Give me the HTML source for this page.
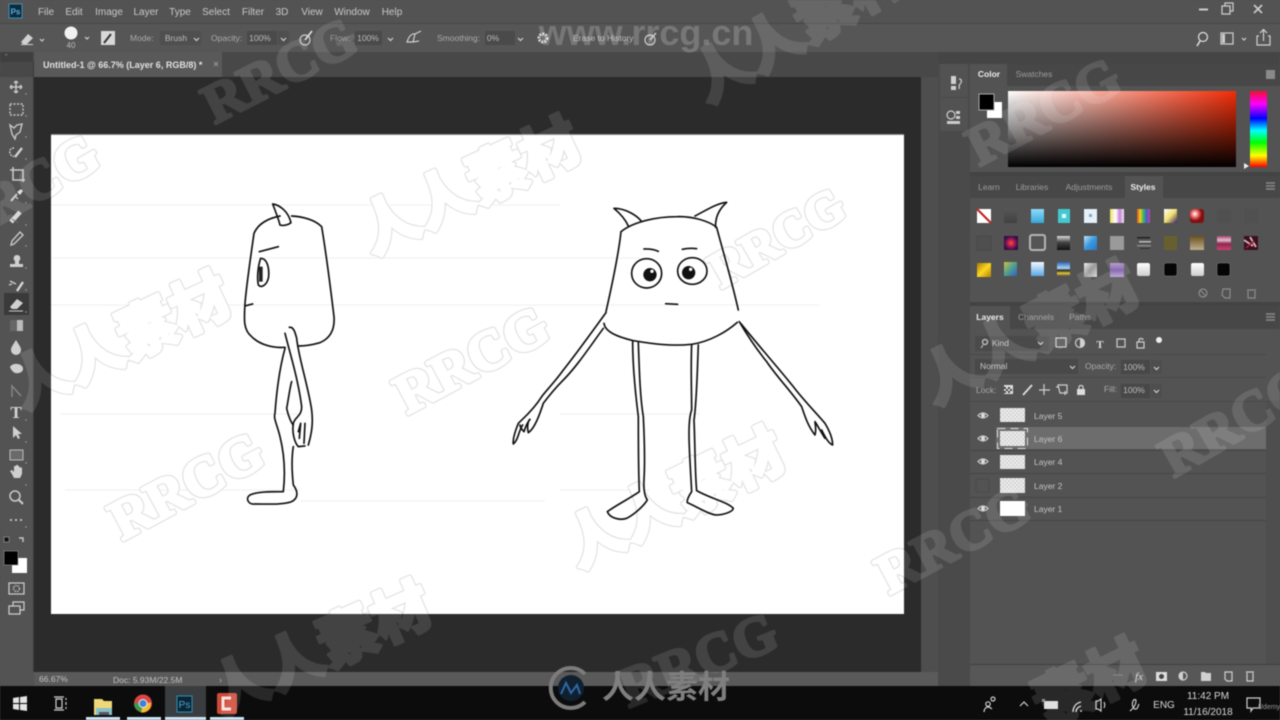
<!DOCTYPE html>
<html><head><meta charset="utf-8"><style>
html,body{margin:0;padding:0;background:#535353;width:1280px;height:720px;overflow:hidden}
svg{display:block;filter:blur(.6px)}
text{font-family:"Liberation Sans","Noto Sans CJK SC",sans-serif;fill:#bdbdbd;font-size:8.5px}
.m{font-size:10px;fill:#c8c8c8;text-anchor:middle}
.o{font-size:8.5px;fill:#aaa}
.oc{font-size:8.5px;fill:#bbb;text-anchor:middle}
.l{font-size:8.5px;fill:#c4c4c4}
.t{font-size:8.5px;fill:#9c9c9c;text-anchor:middle}
.ta{font-size:8.5px;fill:#eee;font-weight:bold;text-anchor:middle}
.i{fill:none;stroke:#cfcfcf;stroke-width:1.2}
.f{fill:#d0d0d0;stroke:none}
.w{font-family:"Liberation Serif",serif;font-weight:bold;font-size:56px;text-anchor:middle}
.c{font-family:"Noto Sans CJK SC","Noto Sans CJK JP",sans-serif;font-weight:900;font-size:59px;text-anchor:middle}
.wd text{fill:#fff;stroke:#fff;stroke-width:3;stroke-linejoin:round}
.wo text{fill:#e2e2e2;stroke:#e2e2e2;stroke-width:5;stroke-linejoin:round}
.wi text{fill:#fff;stroke:#fff;stroke-width:2.6;stroke-linejoin:round}
.d{fill:none;stroke:#111;stroke-width:5;stroke-linecap:round;stroke-linejoin:round}
.tb{fill:none;stroke:#c8c8c8;stroke-width:1.4}
</style></head><body>
<svg width="1280" height="720" viewBox="0 0 1280 720" xmlns="http://www.w3.org/2000/svg">
<defs>
<clipPath id="cv"><rect x="51" y="135" width="853" height="479"/></clipPath>
<clipPath id="nc"><path clip-rule="evenodd" d="M0 0H1280V720H0ZM51 135V614H904V135Z"/></clipPath>
<linearGradient id="gh"><stop offset="0" stop-color="#fff"/><stop offset="1" stop-color="#f22d08"/></linearGradient>
<linearGradient id="gv" x2="0" y2="1"><stop offset="0" stop-color="#000" stop-opacity="0"/><stop offset="1" stop-color="#000"/></linearGradient>
<linearGradient id="hue" x2="0" y2="1"><stop offset="0" stop-color="#f01030"/><stop offset=".17" stop-color="#f0f"/><stop offset=".36" stop-color="#00f"/><stop offset=".52" stop-color="#0ff"/><stop offset=".68" stop-color="#0f0"/><stop offset=".85" stop-color="#ff0"/><stop offset="1" stop-color="#f00"/></linearGradient>
<linearGradient id="s1" x2="0" y2="1"><stop offset="0" stop-color="#8fdcf8"/><stop offset="1" stop-color="#35a8dc"/></linearGradient>
<linearGradient id="s2" x2="0" y2="1"><stop offset="0" stop-color="#565656"/><stop offset="1" stop-color="#404040"/></linearGradient>
<linearGradient id="s3"><stop offset="0" stop-color="#e8e060"/><stop offset=".4" stop-color="#fff"/><stop offset=".7" stop-color="#c880d8"/><stop offset="1" stop-color="#eee"/></linearGradient>
<linearGradient id="s4"><stop offset="0" stop-color="#e05020"/><stop offset=".25" stop-color="#e8d020"/><stop offset=".5" stop-color="#40b060"/><stop offset=".75" stop-color="#4060d0"/><stop offset="1" stop-color="#d040a0"/></linearGradient>
<linearGradient id="s5" x2="1" y2="1"><stop offset="0" stop-color="#fff"/><stop offset=".5" stop-color="#f0e070"/><stop offset="1" stop-color="#402060"/></linearGradient>
<radialGradient id="s6" cx=".35" cy=".35"><stop offset="0" stop-color="#fff"/><stop offset=".6" stop-color="#e05050"/><stop offset="1" stop-color="#801010"/></radialGradient>
<radialGradient id="s7"><stop offset="0" stop-color="#ff5030"/><stop offset=".5" stop-color="#b01858"/><stop offset="1" stop-color="#301048"/></radialGradient>
<linearGradient id="s8" x2="0" y2="1"><stop offset="0" stop-color="#ddd"/><stop offset=".45" stop-color="#444"/><stop offset="1" stop-color="#111"/></linearGradient>
<linearGradient id="s9" x2="1" y2="1"><stop offset="0" stop-color="#bfe4fa"/><stop offset=".5" stop-color="#3a98e0"/><stop offset="1" stop-color="#2878c0"/></linearGradient>
<linearGradient id="s10" x2="0" y2="1"><stop offset="0" stop-color="#6a5020"/><stop offset="1" stop-color="#c0b090"/></linearGradient>
<linearGradient id="s11" x2="0" y2="1"><stop offset="0" stop-color="#b04070"/><stop offset=".3" stop-color="#e0c0d0"/><stop offset=".55" stop-color="#902850"/><stop offset="1" stop-color="#d04070"/></linearGradient>
<linearGradient id="s12" x2="1" y2="1"><stop offset="0" stop-color="#a87808"/><stop offset=".5" stop-color="#fdd820"/><stop offset="1" stop-color="#b08008"/></linearGradient>
<linearGradient id="s13" x2="1" y2="1"><stop offset="0" stop-color="#d0c040"/><stop offset=".5" stop-color="#50a090"/><stop offset="1" stop-color="#3060c0"/></linearGradient>
<linearGradient id="s14" x2="0" y2="1"><stop offset="0" stop-color="#f4f8ff"/><stop offset="1" stop-color="#58a8e8"/></linearGradient>
<linearGradient id="s15" x2="0" y2="1"><stop offset="0" stop-color="#3060b0"/><stop offset=".45" stop-color="#a8d8f8"/><stop offset=".6" stop-color="#222"/><stop offset=".8" stop-color="#e8c830"/><stop offset="1" stop-color="#555"/></linearGradient>
<linearGradient id="s16" x2="1" y2="1"><stop offset="0" stop-color="#f0f0f0"/><stop offset=".5" stop-color="#999"/><stop offset="1" stop-color="#ddd"/></linearGradient>
<linearGradient id="s17" x2="0" y2="1"><stop offset="0" stop-color="#b090c8"/><stop offset=".5" stop-color="#7858a8"/><stop offset="1" stop-color="#b8a0d0"/></linearGradient>
<linearGradient id="s18" x2="0" y2="1"><stop offset="0" stop-color="#fff"/><stop offset="1" stop-color="#cfcfcf"/></linearGradient>
<pattern id="chk" width="4" height="4" patternUnits="userSpaceOnUse"><rect width="4" height="4" fill="#eee"/><rect width="2" height="2" fill="#d4d4d4"/><rect x="2" y="2" width="2" height="2" fill="#d4d4d4"/></pattern>
</defs>

<!-- chrome -->
<rect width="1280" height="720" fill="#535353"/>
<rect y="23" width="1280" height="1" fill="#464646"/>
<rect y="24" width="1280" height="28" fill="#565656"/>
<rect y="52" width="1280" height="25" fill="#484848"/>
<rect x="34" y="52" width="188" height="25" fill="#595959"/>
<rect y="52" width="33" height="10" fill="#3f3f3f"/>
<rect x="921" y="77" width="17" height="595" fill="#4e4e4e"/>
<rect x="938" y="52" width="342" height="12" fill="#454545"/>
<rect x="938" y="64" width="32" height="622" fill="#4a4a4a"/>
<rect x="940" y="64" width="28" height="33" fill="#525252"/>
<rect x="940" y="98" width="28" height="33" fill="#525252"/>
<rect x="34" y="77" width="887" height="595" fill="#2b2b2b"/>
<rect x="33" y="62" width="1" height="610" fill="#3a3a3a"/>
<rect x="51" y="135" width="853" height="479" fill="#fff"/>
<rect x="51" y="134" width="853" height="1" fill="#8a8a8a"/>
<!-- guide lines on canvas -->
<g stroke="#f1f1f1" stroke-width="1"><path d="M51 205H560M51 258H640M51 305H820M60 414H300M560 414H700M65 490H300M300 501H545M560 490H650"/></g>

<!-- watermarks on canvas: outline -->
<g clip-path="url(#cv)">
<g class="wo">
<text class="w" transform="translate(288,87) rotate(-27)">RRCG</text>
<text class="w" transform="translate(32,206) rotate(-30)">RRCG</text>
<text class="w" transform="translate(785,252) rotate(-30)" style="font-size:50px">RRCG</text>
<text class="w" transform="translate(480,376) rotate(-28)">RRCG</text>
<text class="w" transform="translate(195,502) rotate(-28)">RRCG</text>
<text class="w" transform="translate(962,556) rotate(-28)">RRCG</text>
<text class="c" transform="translate(479,205) rotate(-25)">人人素材</text>
<text class="c" transform="translate(129,360) rotate(-25)">人人素材</text>
<text class="c" transform="translate(684,517) rotate(-26)">人人素材</text>
<text class="c" transform="translate(329,668) rotate(-24)">人人素材</text>
</g>
<g class="wi">
<text class="w" transform="translate(288,87) rotate(-27)">RRCG</text>
<text class="w" transform="translate(32,206) rotate(-30)">RRCG</text>
<text class="w" transform="translate(785,252) rotate(-30)" style="font-size:50px">RRCG</text>
<text class="w" transform="translate(480,376) rotate(-28)">RRCG</text>
<text class="w" transform="translate(195,502) rotate(-28)">RRCG</text>
<text class="w" transform="translate(962,556) rotate(-28)">RRCG</text>
<text class="c" transform="translate(479,205) rotate(-25)">人人素材</text>
<text class="c" transform="translate(129,360) rotate(-25)">人人素材</text>
<text class="c" transform="translate(684,517) rotate(-26)">人人素材</text>
<text class="c" transform="translate(329,668) rotate(-24)">人人素材</text>
</g>
</g>

<!-- side character -->
<g transform="translate(230,190) scale(.3333)">
<path class="d" d="M72,130C85,100 115,85 150,78M185,78C220,80 255,90 275,110C285,170 300,280 312,380C315,420 300,445 270,458C245,465 225,468 205,468M165,472C130,475 90,465 65,440C40,420 42,390 45,340C50,280 65,180 72,130"/>
<path class="d" d="M150,105C145,85 135,60 128,42C150,45 175,65 183,98C175,105 160,108 150,105"/>
<path class="d" d="M88,185L145,170M45,348L68,342"/>
<path class="d" d="M92,205C110,205 118,230 116,260C112,285 95,295 85,285C80,260 85,225 92,205"/>
<path d="M87,230L87,275L98,275L98,230Z" fill="#222"/>
<path class="d" d="M178,412C190,410 195,425 200,445C205,500 235,590 245,660C250,700 245,730 235,765M165,430C180,490 205,570 215,650C215,680 195,680 190,700C185,730 195,760 205,770L225,768M205,725L212,700L208,745M225,700L222,760"/>
<path class="d" d="M165,475C150,530 140,600 135,670C130,685 140,700 150,740C165,800 165,860 160,905C120,905 80,905 60,915C45,925 55,945 75,942C110,942 160,945 185,935C205,925 205,905 190,885C185,840 185,800 190,770M170,655C175,630 180,590 185,575M170,655C175,680 185,700 190,705"/>
</g>

<!-- front character -->
<g transform="translate(500,190) scale(.3333)">
<path class="d" d="M363,125C400,95 470,80 530,80C580,78 630,95 650,112C665,170 695,270 715,360M363,125C355,200 335,290 318,365"/>
<path class="d" d="M312,400C315,425 350,440 400,452C450,460 510,470 575,463C630,455 680,425 712,397"/>
<path class="d" d="M385,108C375,85 360,70 342,55C375,55 410,75 425,95M585,78C620,60 650,40 680,37C660,55 645,80 647,112"/>
<path class="d" d="M432,177C450,176 462,178 475,184M547,178C560,175 575,174 590,176M497,341L533,343"/>
<ellipse class="d" cx="440" cy="250" rx="45" ry="44"/><ellipse class="d" cx="577" cy="243" rx="44" ry="40"/>
<circle cx="450" cy="254" r="20" fill="#111"/><circle cx="566" cy="248" r="20" fill="#111"/>
<circle cx="456" cy="244" r="5" fill="#fff"/><circle cx="572" cy="238" r="5" fill="#fff"/>
<path class="d" d="M318,368C280,420 230,490 190,540C165,575 140,600 125,620C100,660 70,685 55,700C45,725 38,750 40,762C55,750 55,725 68,705"/>
<path class="d" d="M310,415C270,470 230,530 190,570C170,590 145,620 130,640C120,670 105,715 85,728C80,710 85,690 90,688C80,700 75,715 72,725C62,715 60,710 60,705"/>
<path class="d" d="M718,395C750,450 780,490 800,515C830,560 870,600 905,650C915,680 925,710 945,735C950,720 945,700 945,695C955,710 965,730 975,745"/>
<path class="d" d="M722,400C770,460 840,540 880,590C910,630 950,670 975,700C990,725 998,745 998,765C985,760 975,740 965,720"/>
<path class="d" d="M398,455C398,520 405,600 415,680C415,750 415,830 418,905C390,925 350,945 322,965C330,985 360,992 380,985C400,975 430,950 442,930C435,920 430,905 432,870C436,800 432,720 430,680C420,620 418,540 415,458"/>
<path class="d" d="M575,465C572,540 575,600 575,660C560,700 570,800 575,905C565,920 560,930 562,938C590,950 630,975 650,975C670,975 700,965 700,955C680,935 630,925 590,902C585,850 585,750 582,690C590,640 592,540 595,465"/>
</g>

<!-- menu -->
<rect x="9" y="4" width="13" height="14" fill="#0d2b40" stroke="#3d90b8" stroke-width="1"/>
<text x="15.5" y="14.5" style="font-size:8px;fill:#5ab0d8;text-anchor:middle;font-weight:bold">Ps</text>
<text class="m" x="46" y="15">File</text><text class="m" x="74" y="15">Edit</text><text class="m" x="109" y="15">Image</text><text class="m" x="146" y="15">Layer</text><text class="m" x="180" y="15">Type</text><text class="m" x="216" y="15">Select</text><text class="m" x="253" y="15">Filter</text><text class="m" x="282" y="15">3D</text><text class="m" x="312" y="15">View</text><text class="m" x="352" y="15">Window</text><text class="m" x="392" y="15">Help</text>
<path d="M1199 9.5h9" stroke="#ccc" stroke-width="2"/>
<path class="i" d="M1222 6h8v8h-8zM1225 6V3h8v8h-3"/>
<path d="M1254 5l8 8M1262 5l-8 8" stroke="#ccc" stroke-width="1.6"/>

<!-- options bar -->
<path class="f" d="M21 42l7-8 5 4-6 6h-4zM21 44h12v1H21z"/><path class="i" d="M40 39l2 2 2-2"/>
<circle cx="71" cy="33" r="6.5" fill="#f2f2f2"/><text x="71" y="48" style="font-size:8px;text-anchor:middle;fill:#bbb">40</text>
<path class="i" d="M85 37l2 2 2-2"/>
<rect x="101" y="31" width="14" height="14" fill="#d8d8d8"/><path d="M104 43l7-9" stroke="#333" stroke-width="2"/>
<text class="o" x="130" y="41">Mode:</text>
<rect x="160" y="31" width="41" height="14" fill="#4f4f4f"/><text class="oc" x="176" y="41">Brush</text><path class="i" d="M194 38l2.500 2.500 2.500-2.500"/>
<text class="o" x="211" y="41">Opacity:</text>
<rect x="247" y="31" width="30" height="14" fill="#4a4a4a"/><rect x="278" y="31" width="11" height="14" fill="#4f4f4f"/><text class="oc" x="260" y="41">100%</text><path class="i" d="M281 38l2.500 2.500 2.500-2.500"/>
<circle class="i" cx="305" cy="40" r="5"/><path d="M305 40l7-9" stroke="#ddd" stroke-width="1.800"/>
<text class="o" x="330" y="41" style="fill:#999">Flow:</text>
<rect x="355" y="31" width="27" height="14" fill="#4a4a4a"/><text class="oc" x="368" y="41">100%</text><path class="i" d="M388 38l2.500 2.500 2.500-2.500"/>
<path class="i" d="M407 42c2-6 5-9 8-8l-2 8zM415 34l6-3M413 42l6-1"/>
<text class="o" x="437" y="41">Smoothing:</text>
<rect x="485" y="31" width="30" height="14" fill="#4a4a4a"/><text class="oc" x="493" y="41">0%</text><path class="i" d="M518 38l2.500 2.500 2.500-2.500"/>
<circle cx="543" cy="38" r="4" fill="none" stroke="#d8d8d8" stroke-width="3" stroke-dasharray="2 1"/>
<text class="o" x="573" y="41" style="fill:#bbb">Erase to History</text>
<circle class="i" cx="650" cy="40" r="5"/><path d="M650 40l6-7" stroke="#ccc" stroke-width="1.500"/>
<circle class="i" cx="1203" cy="37" r="4.500" style="stroke:#e0e0e0"/><path d="M1200 41l-3 5" stroke="#e0e0e0" stroke-width="1.500"/>
<rect class="i" x="1221" y="33" width="12" height="11"/><rect x="1222" y="34" width="3" height="9" fill="#ccc"/>
<path class="i" d="M1242 38l2 2 2-2"/>
<path class="i" d="M1259 36h-2v9h13v-9h-2M1263.500 41V30M1260 33l3.500-3.500 3.500 3.500"/>

<!-- tab -->
<text x="43" y="68" style="font-size:9px;fill:#e2e2e2;font-weight:bold">Untitled-1 @ 66.7% (Layer 6, RGB/8) *</text>
<path d="M214 62l4 4M218 62l-4 4" stroke="#999"/>
<text x="5" y="59" style="font-size:7px;fill:#999">&#8221;</text>

<!-- left toolbar -->
<rect x="4" y="293" width="25" height="22" fill="#3a3a3a"/>
<g>
<path class="tb" d="M16 81v12M10 87h12M16 81l-2 2M16 81l2 2M16 93l-2-2M16 93l2-2M10 87l2-2M10 87l2 2M22 87l-2-2M22 87l-2 2"/>
<rect class="tb" x="10" y="104" width="13" height="11" stroke-dasharray="2 1.500"/>
<path class="tb" d="M10 125l4 3 3-3 5-1-2 8-4 3-1 4-3-5z"/>
<path class="tb" d="M14 148c-3 0-5 2-4 5s3 4 4 3" stroke-dasharray="2 1"/><path d="M15 157l7-9" stroke="#d0d0d0" stroke-width="2.400"/>
<path class="tb" style="stroke-width:1.600" d="M13 167v13h12M10 170h13v12"/>
<path d="M11 201l6-7" stroke="#d0d0d0" stroke-width="2"/><path d="M17 192l4-3 2 2-3 4z" fill="#ddd"/><path class="tb" d="M15 196l3 3"/>
<path d="M11 222l9-10" stroke="#d8d8d8" stroke-width="4.500"/><path d="M12 219l6 4" stroke="#666"/>
<path class="tb" d="M11 245l1-4 8-9 3 3-9 9z"/>
<path class="f" d="M10 267h13v-3h-4v-3c2-1 2-6-2-6s-4 5-2 6v3h-5z"/>
<path d="M17 291l6-9" stroke="#d8d8d8" stroke-width="2.400"/><path d="M10 281l6 3M9 285l3-1" stroke="#ccc" stroke-width="1.400"/>
<path class="f" d="M10 307l7-8 6 4-6 6h-5z"/><path d="M9 311h14" stroke="#ccc"/>
<rect x="10" y="320" width="13" height="11" fill="#bbb"/><rect x="10" y="320" width="7" height="11" fill="#666"/>
<path class="f" d="M16 340c-3 5-5 7-5 10a5 5 0 0 0 10 0c0-3-2-5-5-10z"/>
<path class="f" d="M10 367c2-4 9-4 12-1 2 3 1 6-3 7-4 1-7-1-9-6z"/>
<path class="tb" d="M12 397l0-11 9 10" style="stroke:#888"/>
<text x="16" y="418" style="font-family:'Liberation Serif',serif;font-size:17px;fill:#d4d4d4;text-anchor:middle;font-weight:bold">T</text>
<path class="f" d="M13 426l0 12 3-3 2 4 2-1-2-4h4z"/>
<rect x="10" y="450" width="13" height="10" fill="#6a6a6a" stroke="#bbb"/>
<path class="f" d="M12 474l-2-3 2-1 2 2 0-6h2v-1h2v1h1l1 2 1-1 1 1v6l-2 4h-6z"/>
<circle class="tb" cx="15" cy="496" r="5" style="stroke-width:1.500"/><path d="M19 500l4 4" stroke="#ccc" stroke-width="2"/>
<path d="M10 520h2M15 520h2M20 520h2" stroke="#ccc" stroke-width="1.800"/>
<rect x="4" y="537" width="5" height="5" fill="#111" stroke="#aaa" stroke-width=".6"/><path class="tb" d="M19 538h4v4"/>
</g>
<g fill="#aaa"><circle cx="26" cy="94" r=".7"/><circle cx="26" cy="116" r=".7"/><circle cx="26" cy="137" r=".7"/><circle cx="26" cy="159" r=".7"/><circle cx="26" cy="203" r=".7"/><circle cx="26" cy="225" r=".7"/><circle cx="26" cy="246" r=".7"/><circle cx="26" cy="268" r=".7"/><circle cx="26" cy="290" r=".7"/><circle cx="26" cy="312" r=".7"/><circle cx="26" cy="420" r=".7"/><circle cx="26" cy="442" r=".7"/><circle cx="26" cy="463" r=".7"/><circle cx="26" cy="485" r=".7"/><circle cx="26" cy="527" r=".7"/></g>
<rect x="12" y="558" width="15" height="15" fill="#fff"/>
<rect x="4" y="551" width="14" height="14" fill="#000" stroke="#999" stroke-width=".6"/>
<rect class="i" x="9" y="583" width="15" height="11"/><circle class="i" cx="16.500" cy="588.500" r="3" stroke-dasharray="1.500 1"/>
<path class="i" d="M13 606v-4h11v8h-4M9 606h11v8H9z"/>

<!-- icon dock -->
<path class="f" d="M951 76h5v8h-5zM951 86h5v4h-5z"/><path class="i" d="M959 79c3 0 3 3 1 5s0 4-1 5"/>
<circle class="i" cx="951" cy="115" r="4"/><rect x="956" y="111" width="4" height="3" fill="#ccc"/><rect x="956" y="116" width="4" height="3" fill="#ccc"/><rect x="947" y="121" width="13" height="3" fill="#ccc"/>

<!-- color panel -->
<rect x="970" y="64" width="310" height="108" fill="#535353"/>
<rect x="970" y="64" width="310" height="22" fill="#474747"/><rect x="970" y="64" width="37" height="22" fill="#535353"/>
<text class="ta" x="989" y="77">Color</text><text class="t" x="1034" y="77">Swatches</text>
<rect x="1266" y="70" width="9" height="9" fill="#8a8a8a"/>
<rect x="987" y="102" width="15" height="16" fill="#fff"/>
<rect x="979" y="94" width="15" height="16" fill="#000" stroke="#aaa"/>
<rect x="1008" y="91" width="228" height="76" fill="url(#gh)"/><rect x="1008" y="91" width="228" height="76" fill="url(#gv)"/>
<rect x="1250" y="91" width="17" height="76" fill="url(#hue)"/>
<path d="M1244 163l5 3-5 3z" fill="#eee"/>

<!-- styles panel -->
<rect x="970" y="172" width="310" height="4" fill="#434343"/>
<rect x="970" y="176" width="310" height="22" fill="#474747"/><rect x="1125" y="176" width="38" height="22" fill="#535353"/>
<text class="t" x="989" y="190">Learn</text><text class="t" x="1032" y="190">Libraries</text><text class="t" x="1089" y="190">Adjustments</text><text class="ta" x="1143" y="190">Styles</text>
<path d="M1266 183h9M1266 186h9M1266 189h9" stroke="#8a8a8a" stroke-width="1.500"/>
<g>
<rect x="977" y="209" width="14" height="14" fill="#fff"/><path d="M977 209l14 14" stroke="#c02020" stroke-width="2"/>
<rect x="1004" y="209" width="13" height="14" fill="url(#s2)"/>
<rect x="1031" y="209" width="13" height="14" fill="url(#s1)"/>
<rect x="1058" y="209" width="12" height="14" fill="#45c8d0"/><rect x="1062" y="214" width="4" height="4" fill="#dff"/>
<rect x="1084" y="209" width="13" height="14" fill="#e4f0fa"/><rect x="1089" y="214" width="3" height="3" fill="#8ab"/>
<rect x="1110" y="209" width="14" height="14" fill="url(#s3)"/>
<rect x="1137" y="209" width="13" height="14" fill="url(#s4)"/>
<rect x="1164" y="209" width="13" height="14" fill="url(#s5)"/>
<rect x="1190" y="209" width="14" height="14" rx="3" fill="url(#s6)"/>
<rect x="1217" y="209" width="14" height="14" fill="#505050"/>
<rect x="1244" y="209" width="14" height="14" fill="#505050"/>
<rect x="977" y="236" width="14" height="14" fill="#4f4f4f" stroke="#484848"/>
<rect x="1004" y="236" width="14" height="14" fill="url(#s7)"/>
<rect x="1030" y="235" width="15" height="15" rx="2" fill="#555" stroke="#b5b5b5" stroke-width="2"/>
<rect x="1057" y="236" width="13" height="14" fill="url(#s8)"/>
<rect x="1084" y="236" width="13" height="14" fill="url(#s9)"/>
<rect x="1110" y="236" width="14" height="14" fill="#9a9a9a"/>
<rect x="1137" y="237" width="13" height="1.500" fill="#222"/><rect x="1139" y="241" width="12" height="1.500" fill="#bbb"/><rect x="1137" y="245" width="14" height="1.500" fill="#888"/><rect x="1140" y="248" width="10" height="1" fill="#333"/>
<rect x="1164" y="236" width="13" height="14" fill="#67602e"/>
<rect x="1190" y="236" width="14" height="14" fill="url(#s10)"/>
<rect x="1217" y="236" width="14" height="14" fill="url(#s11)"/>
<rect x="1244" y="236" width="14" height="14" fill="#3a1020"/><path d="M1244 240l9 6M1250 237l6 10" stroke="#d8b8c0" stroke-width="1.800"/><path d="M1246 248l8-7" stroke="#a02030" stroke-width="1.800"/>
<rect x="977" y="263" width="14" height="14" fill="url(#s12)"/>
<rect x="1004" y="262" width="13" height="14" fill="url(#s13)"/>
<rect x="1031" y="262" width="13" height="14" fill="url(#s14)"/>
<rect x="1057" y="262" width="13" height="14" fill="url(#s15)"/>
<rect x="1084" y="263" width="13" height="14" fill="url(#s16)"/>
<rect x="1110" y="263" width="14" height="14" fill="url(#s17)"/>
<rect x="1137" y="263" width="13" height="13" rx="2" fill="url(#s18)"/>
<rect x="1164" y="263" width="13" height="13" rx="2" fill="#050505" stroke="#888" stroke-width=".5"/>
<rect x="1191" y="263" width="13" height="13" rx="2" fill="url(#s18)"/>
<rect x="1217" y="263" width="13" height="13" rx="2" fill="#050505" stroke="#888" stroke-width=".5"/>
</g>
<circle cx="1203" cy="293" r="4" fill="none" stroke="#8c8c8c" stroke-width="1.200"/><path d="M1200 290l6 6" stroke="#8c8c8c"/>
<path d="M1223 289h7v9h-5l-3-3z" fill="none" stroke="#8c8c8c" stroke-width="1.200"/>
<path d="M1247 290h9M1248 291v7h7v-7" fill="none" stroke="#8c8c8c" stroke-width="1.200"/>

<!-- layers panel -->
<rect x="970" y="302" width="310" height="4" fill="#434343"/>
<rect x="970" y="306" width="310" height="23" fill="#474747"/><rect x="970" y="306" width="40" height="23" fill="#535353"/>
<text class="ta" x="990" y="320">Layers</text><text class="t" x="1036" y="320">Channels</text><text class="t" x="1080" y="320">Paths</text>
<path d="M1266 314h9M1266 317h9M1266 320h9" stroke="#8a8a8a" stroke-width="1.500"/>
<rect x="975" y="336" width="74" height="15" fill="#4a4a4a"/>
<circle class="i" cx="985" cy="342" r="2.500"/><path d="M983 345l-2 3" stroke="#ccc"/>
<text class="l" x="992" y="346">Kind</text><path class="i" d="M1038 342l2.500 2.500 2.500-2.500"/>
<rect class="i" x="1056" y="338" width="10" height="9"/><circle class="i" cx="1080" cy="343" r="4.500"/><path class="f" d="M1080 338.500a4.500 4.500 0 0 1 0 9z"/>
<text x="1100" y="348" style="font-family:'Liberation Serif',serif;font-size:11px;fill:#ddd;text-anchor:middle;font-weight:bold">T</text>
<rect class="i" x="1117" y="339" width="8" height="8"/><rect class="i" x="1137" y="342" width="7" height="6"/><path class="i" d="M1139 342v-2c0-2 4-2 4 0"/>
<circle cx="1159" cy="340" r="3" fill="#eee"/>
<rect x="970" y="354" width="296" height="1" fill="#4a4a4a"/>
<rect x="975" y="359" width="103" height="15" fill="#494949"/><text class="l" x="980" y="369">Normal</text><path class="i" d="M1070 366l2.500 2.500 2.500-2.500"/>
<text class="o" x="1085" y="369">Opacity:</text>
<rect x="1121" y="360" width="29" height="14" fill="#484848"/><rect x="1151" y="360" width="11" height="14" fill="#4e4e4e"/><text class="oc" x="1134" y="370">100%</text><path class="i" d="M1154 367l2.500 2.500 2.500-2.500"/>
<rect x="970" y="377" width="296" height="1" fill="#4a4a4a"/>
<text class="o" x="976" y="393">Lock:</text>
<rect x="1004" y="385" width="9" height="9" fill="#ddd"/><path d="M1004 387h2v2h-2zM1008 387h2v2h-2zM1006 389h2v2h-2zM1010 389h2v2h-2zM1004 391h2v2h-2zM1008 391h2v2h-2z" fill="#444"/>
<path d="M1023 395l9-10" stroke="#ddd" stroke-width="1.800"/>
<path class="i" d="M1044 384v11M1039 390h11"/>
<path class="i" d="M1058 385h9v8h-7zM1056 387h3M1065 395v-4"/>
<rect x="1077" y="389" width="8" height="6" fill="#ddd"/><path class="i" d="M1079 389v-2c0-2 4-2 4 0v2"/>
<text class="o" x="1104" y="392">Fill:</text>
<rect x="1121" y="384" width="29" height="14" fill="#484848"/><rect x="1151" y="384" width="11" height="14" fill="#4e4e4e"/><text class="oc" x="1134" y="393">100%</text><path class="i" d="M1154 390l2.500 2.500 2.500-2.500"/>
<rect x="970" y="401" width="310" height="1" fill="#4a4a4a"/>
<!-- rows -->
<rect x="996" y="427" width="270" height="22" fill="#6d6d6d"/>
<g fill="#454545"><rect x="970" y="450" width="296" height="1"/><rect x="970" y="473" width="296" height="1"/><rect x="970" y="497" width="296" height="1"/><rect x="970" y="520" width="296" height="1"/></g>
<rect x="1266" y="402" width="14" height="262" fill="#4e4e4e"/>
<rect x="1000" y="408" width="25" height="14" fill="url(#chk)"/>
<rect x="1000" y="431" width="25" height="15" fill="url(#chk)"/>
<rect x="997.500" y="428.500" width="30" height="20" fill="none" stroke="#e0e0e0" stroke-dasharray="8 5"/>
<rect x="1000" y="455" width="25" height="14" fill="url(#chk)"/>
<rect x="1000" y="478" width="25" height="15" fill="url(#chk)"/>
<rect x="1000" y="501" width="25" height="15" fill="#fff"/>
<text class="l" x="1034" y="419">Layer 5</text><text class="l" x="1034" y="442">Layer 6</text><text class="l" x="1034" y="465">Layer 4</text><text class="l" x="1034" y="489">Layer 2</text><text class="l" x="1034" y="512">Layer 1</text>
<g>
<path class="i" d="M978 415.500q5-5 10 0q-5 5-10 0z"/><circle cx="983" cy="415.500" r="2" fill="#ddd"/>
<path class="i" d="M978 438.500q5-5 10 0q-5 5-10 0z"/><circle cx="983" cy="438.500" r="2" fill="#ddd"/>
<path class="i" d="M978 461.500q5-5 10 0q-5 5-10 0z"/><circle cx="983" cy="461.500" r="2" fill="#ddd"/>
<rect x="976" y="479" width="13" height="13" fill="none" stroke="#4a4a4a"/>
<path class="i" d="M978 508.500q5-5 10 0q-5 5-10 0z"/><circle cx="983" cy="508.500" r="2" fill="#ddd"/>
</g>
<rect x="970" y="664" width="310" height="1" fill="#3f3f3f"/>
<rect x="970" y="665" width="310" height="21" fill="#575757"/>
<path class="i" d="M1113 675h6M1119 675h4" style="stroke:#777"/>
<text x="1139" y="680" style="font-family:'Liberation Serif',serif;font-size:11px;fill:#ddd;font-style:italic;text-anchor:middle">fx</text>
<rect x="1156" y="672" width="11" height="9" fill="#ddd"/><circle cx="1161.500" cy="676.500" r="2.500" fill="#444"/>
<circle class="i" cx="1183" cy="676" r="4"/><path class="f" d="M1183 672a4 4 0 0 0 0 8z"/>
<path class="f" d="M1201 672h4l1 1h5v8h-10z"/>
<path class="i" d="M1225 672h7v9h-5l-2-2z"/>
<path class="i" d="M1246 672h8M1247 673v8h6v-8"/>

<!-- status -->
<rect x="34" y="672" width="904" height="14" fill="#5a5a5a"/>
<rect y="662" width="33" height="24" fill="#535353"/>
<text x="39" y="682" style="font-size:8.500px;fill:#c0c0c0">66.67%</text>
<text x="113" y="683" style="font-size:8.500px;fill:#c0c0c0">Doc: 5.93M/22.5M</text>
<text x="219" y="683" style="font-size:9px;fill:#aaa">&#8250;</text>

<!-- taskbar -->
<rect y="686" width="1280" height="34" fill="#0c0c0c"/>
<rect x="165" y="686" width="41" height="34" fill="#3a3d3f"/>
<g fill="#cfe4f5"><rect x="86" y="717" width="34" height="3"/><rect x="127" y="717" width="34" height="3"/><rect x="165" y="717" width="41" height="3"/><rect x="210" y="717" width="34" height="3"/></g>
<path d="M13 698l6-1v6h-6zM20 697l7-1v7h-7zM13 704h6v6l-6-1zM20 704h7v7l-7-1z" fill="#e4e4e4"/>
<path class="i" d="M54 697h10M54 710h10M56 699h6v9h-6zM66 698v2M66 702v3M66 707v2"/>
<path d="M94 699h8l2 2h8v14H94z" fill="#f0d878"/><rect x="96" y="708" width="16" height="7" fill="#88c0c8"/><rect x="99" y="712" width="10" height="3" fill="#556"/>
<circle cx="143" cy="703.500" r="9" fill="#d44"/><path d="M143 703.500L134 703a9 9 0 0 0 7 9z" fill="#3a9a4a"/><path d="M143 703.500l8-1a9 9 0 0 1-10 10z" fill="#f0c030"/><circle cx="143" cy="703.500" r="4" fill="#4080d8" stroke="#eee"/>
<rect x="177" y="696" width="15" height="16" fill="#0b2535" stroke="#2f8fb5"/><text x="184.500" y="708" style="font-size:10px;fill:#4ba5cf;text-anchor:middle">Ps</text>
<rect x="217" y="693" width="20" height="21" rx="2" fill="#cf4a38"/><path d="M231 698h-8v11h8" fill="none" stroke="#f3e4de" stroke-width="3"/>

<!-- tray -->
<circle class="i" cx="988" cy="704" r="2.200"/><path class="i" d="M984 712c0-3 2-5 4-5s3 1 4 2"/><circle class="i" cx="993" cy="699" r="2"/>
<path class="i" d="M1020 706l4-4 4 4"/>
<rect x="1044" y="701" width="14" height="8" fill="#ddd"/><rect x="1042" y="699" width="3" height="3" fill="#888"/>
<path class="i" d="M1073 712c0-5 3-9 8-10M1076 712c0-3 2-5 5-6" style="stroke-width:1.400"/><circle cx="1081" cy="711" r="1" fill="#ccc"/>
<path class="i" d="M1096 701h2l3-2v12l-3-2h-2zM1104 702c1 2 1 4 0 6"/>
<path class="i" d="M1130 711c4-3 6-7 6-10 0-2-2-2-3 0s-1 7 2 8 3-4 4-5"/>
<text x="1164" y="708" style="font-size:10px;fill:#dadada;text-anchor:middle">ENG</text>
<text x="1208" y="699" style="font-size:10px;fill:#dadada;text-anchor:middle">11:42 PM</text>
<text x="1208" y="715" style="font-size:10px;fill:#dadada;text-anchor:middle">11/16/2018</text>
<path class="i" d="M1247 698h13v10h-7l-2 3v-3h-4z"/>
<text x="1258" y="709" style="font-size:7px;fill:#999">Udemy</text>

<!-- watermarks over dark UI -->
<g clip-path="url(#nc)"><g class="wd" opacity=".12">
<text class="w" transform="translate(288,87) rotate(-27)">RRCG</text>
<text class="w" transform="translate(32,206) rotate(-30)">RRCG</text>
<text class="w" transform="translate(1052,128) rotate(-28)">RRCG</text>
<text class="w" transform="translate(785,252) rotate(-30)" style="font-size:50px">RRCG</text>
<text class="w" transform="translate(480,376) rotate(-28)">RRCG</text>
<text class="w" transform="translate(1245,437) rotate(-30)">RRCG</text>
<text class="w" transform="translate(195,502) rotate(-28)">RRCG</text>
<text class="w" transform="translate(962,556) rotate(-28)">RRCG</text>
<text class="w" transform="translate(705,677) rotate(-22)">RRCG</text>
<text class="c" transform="translate(809,45) rotate(-30)">人人素材</text>
<text class="c" transform="translate(479,205) rotate(-25)">人人素材</text>
<text class="c" transform="translate(129,360) rotate(-25)">人人素材</text>
<text class="c" transform="translate(1039,352) rotate(-27)">人人素材</text>
<text class="c" transform="translate(684,517) rotate(-26)">人人素材</text>
<text class="c" transform="translate(329,668) rotate(-24)">人人素材</text>
<text class="c" transform="translate(1099,702) rotate(-26)">素材</text>
</g></g>
<text x="646" y="45" style="font-family:'Liberation Sans',sans-serif;font-weight:bold;font-size:36px;fill:rgba(255,255,255,.2);text-anchor:middle">www.rrcg.cn</text>

<!-- center logo -->
<path d="M585 702a20 20 0 1 1 0-28" fill="none" stroke="#7c7c7c" stroke-width="4"/>
<circle cx="571" cy="688" r="13" fill="#10202f"/>
<path d="M561 694l5-11 5 10 6-8 3 9" fill="none" stroke="#2f68a8" stroke-width="2"/>
<text x="666" y="698" style="font-family:'Noto Sans CJK SC',sans-serif;font-weight:bold;font-size:32px;fill:#7f7f7f;text-anchor:middle">人人素材</text>
</svg>
</body></html>
